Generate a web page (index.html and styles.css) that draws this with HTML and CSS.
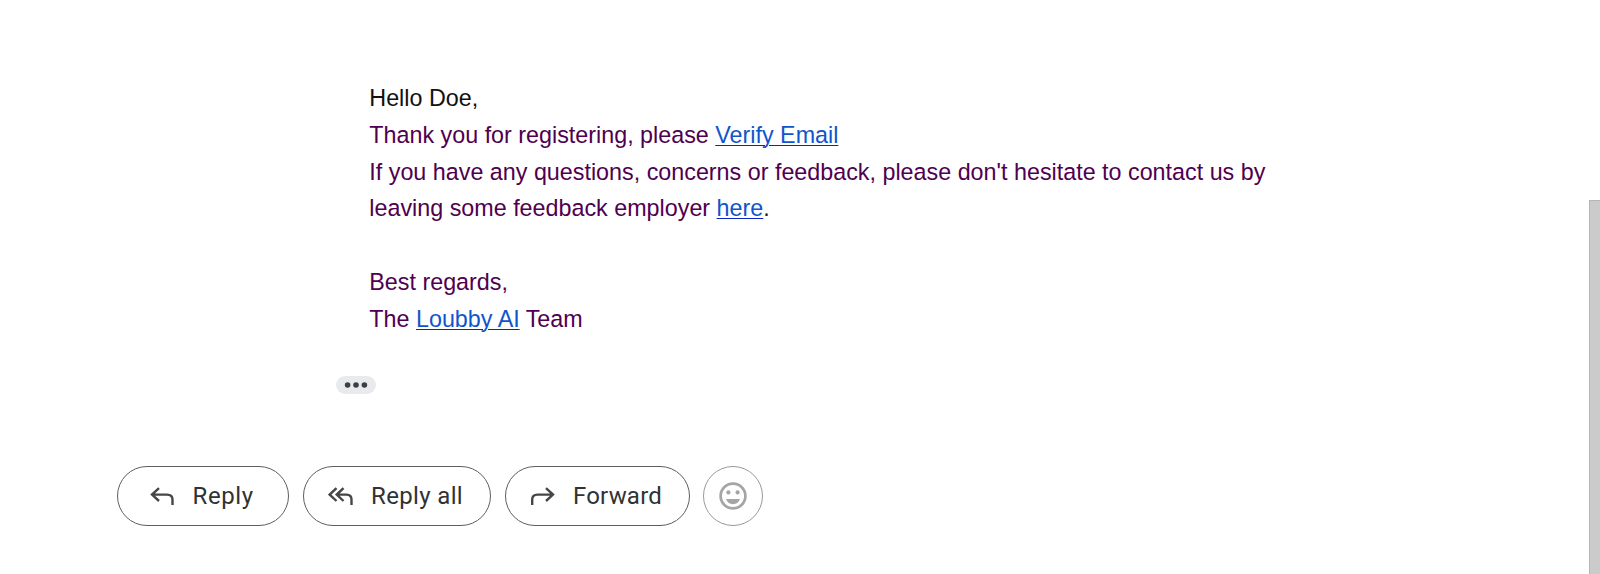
FILE: index.html
```html
<!DOCTYPE html>
<html lang="en">
<head>
<meta charset="utf-8">
<title>Verify Email</title>
<link rel="stylesheet" href="styles.css">
</head>
<body>
<div class="viewport">
<main class="mail">
  <div class="message">
    <p class="line greeting">Hello Doe,</p>
    <p class="line intro">Thank you for registering, please <a class="link" href="#">Verify Email</a></p>
    <p class="line contact">If you have any questions, concerns or feedback, please don't hesitate to contact us by</p>
    <p class="line feedback">leaving some feedback employer <a class="link" href="#">here</a><span class="stop">.</span></p>
    <p class="line regards">Best regards,</p>
    <p class="line team">The <a class="link" href="#">Loubby AI</a> Team</p>
  </div>
  <button class="more" aria-label="Show trimmed content"><svg width="24" height="6" viewBox="0 0 24 6"><circle cx="3.6" cy="3" r="2.8"/><circle cx="12" cy="3" r="2.8"/><circle cx="20.4" cy="3" r="2.8"/></svg></button>
  <div class="actions">
    <button class="action reply">
      <svg class="icon" width="26" height="20" viewBox="0 0 26 20"><path d="M10 2.2 3 8.6l7 6.4M3.5 8.6H18q5.5 0 5.5 5V19"/></svg>
      <span class="label">Reply</span>
    </button>
    <button class="action reply-all">
      <svg class="icon" width="26" height="20" viewBox="0 0 26 20"><path d="M8.5 2.2 1.7 8.6l6.8 6.4M15.5 2.2 8.7 8.6l6.8 6.4M9 8.6h9.5q5 0 5 5V19"/></svg>
      <span class="label">Reply all</span>
    </button>
    <button class="action forward">
      <svg class="icon" width="26" height="20" viewBox="0 0 26 20"><path d="M16 2.2l7 6.4-7 6.4M22.5 8.6H7.5q-5.3 0-5.3 5V19"/></svg>
      <span class="label">Forward</span>
    </button>
    <button class="action emoji" aria-label="Add reaction">
      <svg class="face" width="28" height="28" viewBox="0 0 28 28"><circle class="ring" cx="14" cy="14" r="12.4"/><circle cx="9.4" cy="10.4" r="2.1"/><circle cx="18.6" cy="10.4" r="2.1"/><path d="M7 17h14q-2 5.2-7 5.2t-7-5.2z"/></svg>
    </button>
  </div>
</main>
<div class="scrollbar"><div class="thumb"></div></div>
</div>
</body>
</html>
```

FILE: styles.css
```css
* { box-sizing: border-box; }
body { margin: 0; background: #fff; }
.viewport { display: flex; height: 574px; overflow: hidden; }
.mail { flex: 1; padding-top: 80px; }
.message {
  padding-left: 369.3px;
  font: 23.32px/36.8px "Liberation Sans", Arial, sans-serif;
  color: #500050;
  white-space: nowrap;
}
.line { margin: 0; }
.greeting { color: #111; }
.regards { margin-top: 36.8px; }
.link { color: #1155cc; text-decoration: underline 1px #0b22c8; text-underline-offset: 2px; }
.stop { color: #222; }
.more {
  display: flex; align-items: center; justify-content: center;
  width: 40px; height: 18px; margin: 38.6px 0 0 336px; padding: 0;
  border: 0; border-radius: 9px; background: #e8eaed; fill: #3c4043;
}
.actions { display: flex; gap: 14px; margin: 71.6px 0 0 116.5px; }
.action {
  display: flex; align-items: center; height: 60px; padding: 0;
  border: 1px solid #5c5f5e; border-radius: 30px; background: #fff;
  font: 24px/30px Roboto, sans-serif; color: #303332; white-space: nowrap;
}
.reply { width: 172.5px; padding-left: 31px; letter-spacing: 0.6px; }
.reply .icon { margin-right: 18px; }
.reply-all { width: 188px; padding-left: 24px; letter-spacing: 0.35px; }
.forward { width: 185px; padding-left: 24px; letter-spacing: 0.2px; }
.emoji { width: 60px; justify-content: center; margin-left: -0.6px; border-color: #99999b; }
.icon { fill: none; stroke: #444746; stroke-width: 2.4; margin-right: 17px; }
.face { fill: #a5a5a5; }
.ring { fill: none; stroke: #a5a5a5; stroke-width: 2.7; }
.scrollbar { width: 11px; padding-top: 200px; }
.thumb { height: 374px; background: #cbcbcb; border: solid #b5b5b5; border-width: 1px 0 0 1px; }
```
